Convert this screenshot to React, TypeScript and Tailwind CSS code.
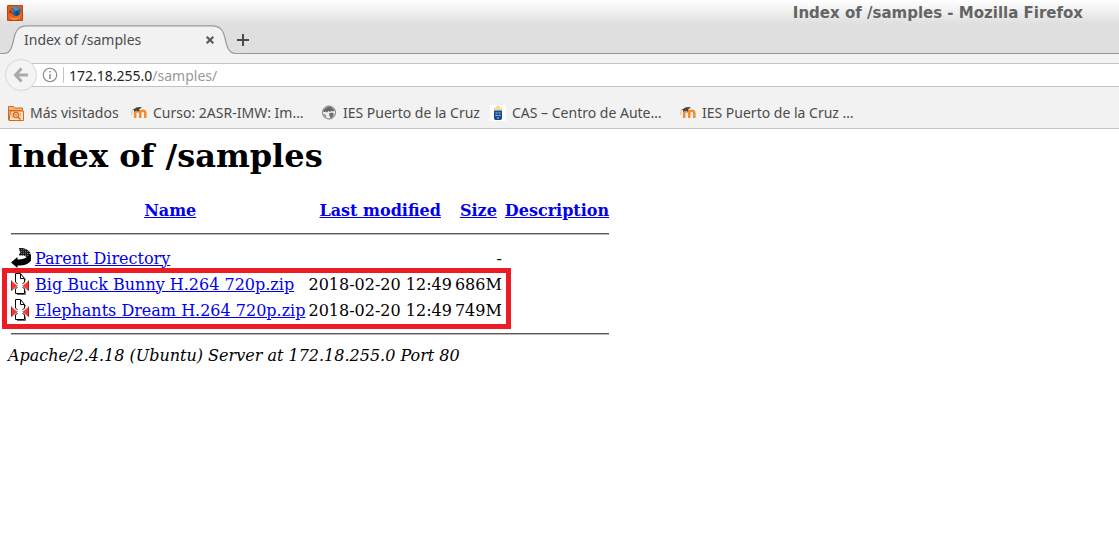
import React from "react";

function FirefoxIcon() {
  return (
    <svg width="16" height="16" viewBox="0 0 16 16" aria-hidden="true">
      <rect width="16" height="16" rx="1" fill="#b5481a" />
      <rect x="1" y="1" width="14" height="14" fill="#e0601c" />
      <circle cx="8.500" cy="7" r="5.500" fill="#22669c" />
      <path d="M5 2.500c2.500-1.500 6-.6 7.500 1.500l-2 .8.5 1.500-3-.5z" fill="#4295c6" />
      <path d="M9 5.500l2.500 1 .5 3-2.500 2-1.500-2z" fill="#1b4a79" />
      <path d="M1 2c.8 1.500 2 1.800 3.500 2L7 6 5 7.200c0 2.200 1.500 3.800 4 3.800 2.500 0 4.200-1.500 4.700-4l.7-2.500C15.600 9 13.500 14.800 8.300 14.800 3 14.800.6 10.500 1 6z" fill="#e9601d" />
      <path d="M2 9.500c1 3 3.500 4.200 7 3.800 2.500-.5 4-2.300 4.800-4.500-.5 3.700-2.800 6-6.100 6C4.500 14.800 2.300 12.500 2 9.500z" fill="#f39a2b" />
      <path d="M2.500 4.500l2.500 1.500-1 3-1.500-1z" fill="#a52b13" />
    </svg>
  );
}

function MostVisitedIcon() {
  return (
    <svg width="16" height="16" viewBox="0 0 16 16" fill="none" aria-hidden="true">
      <path d="M.5 15V1.500h5l1 1.500h8v3" fill="#f4b780" stroke="#d5691b" />
      <path d="M1 15.500l1.500-9.500h13V15.500z" fill="#fbdfc0" stroke="#d5691b" />
      <path d="M1 5.500h12.500" stroke="#d5691b" />
      <circle cx="8" cy="10" r="2.600" stroke="#d5691b" strokeWidth="1.300" />
      <circle cx="8" cy="10" r=".9" fill="#d5691b" />
      <path d="M10 12l2.500 2.500" stroke="#d5691b" strokeWidth="1.500" />
      <path d="M4 8v5M12.500 8v3" stroke="#eda468" />
    </svg>
  );
}

function MoodleIcon() {
  return (
    <svg width="16" height="16" viewBox="0 0 16 16" fill="none" aria-hidden="true">
      <path d="M4.200 13V8C4.200 5.700 9 5.500 9.200 8V13M9.200 8C9.400 4.900 14.300 5 14.300 8V13" stroke="#f68b2c" strokeWidth="2.500" />
      <path d="M1.500 4.700L6 2.300l5-.3L8.300 4.500l-.2 2.200C6.500 5.300 4.800 5.700 3.200 7l-.3-2z" fill="#454545" />
      <path d="M1.500 4.700C.8 6 .8 8 .6 9.800" stroke="#c9b8a5" strokeWidth=".8" />
    </svg>
  );
}

function GlobeIcon() {
  return (
    <svg width="16" height="16" viewBox="0 0 16 16" aria-hidden="true">
      <circle cx="8" cy="7.500" r="6.500" fill="#eee" stroke="#777" strokeWidth="1" />
      <path d="M4 3.500c1.500-1.500 4-2 6-1.600l2 1.600 1.500 2-1.500 1-1.500-.7-1 1.200-2-1L6 7.500 4.500 6.500 3 7.200 2 6z" fill="#686868" />
      <path d="M8 8.500l2.500-1 2.500 1-1 3-2 2-1.500-2.500z" fill="#707070" />
      <path d="M2.500 9l2 .5 1 3-1.300-.3z" fill="#888" />
    </svg>
  );
}

function CanaryIcon() {
  return (
    <svg width="16" height="16" viewBox="0 0 16 16" aria-hidden="true">
      <rect width="16" height="16" fill="#fff" />
      <path d="M4.500 5L3.500 2.500l2 .4L7 1.500l1-.9 1 .9 1.500 1.400 2-.4L11.500 5z" fill="#f4cd72" />
      <path d="M5 3.500h6" stroke="#fff4d6" strokeWidth=".7" />
      <path d="M4 5.500h8v7.500c0 1.500-1 2-2 2H6c-1 0-2-.5-2-2z" fill="#124d94" />
      <path d="M5.500 7.500h2v1h-2zM8.500 7.500h2v1h-2zM5.500 10h2v1h-2zM8.500 10h2v1h-2zM7 12.500h2v1H7z" fill="#b9cee6" />
    </svg>
  );
}

function ParentIcon() {
  return (
    <svg className="block" width="20" height="22" viewBox="0 0 20 22" aria-hidden="true">
      <defs>
        <pattern id="dither" width="2" height="2" patternUnits="userSpaceOnUse">
          <rect width="2" height="2" fill="#1c1c1c" />
          <rect width="1" height="1" fill="#777" />
        </pattern>
      </defs>
      <path d="M8 1h4l4 1.500L19 5l1 4-3 2-4-2.500L8 8.500V7l1.500-2L8 3z" fill="url(#dither)" />
      <path d="M0 15.500L6.500 10v2.500c5 .2 9.500-1.500 12.500-5l1 .5v5.500C17.500 17.500 12 18.700 6.500 18.500V21z" fill="#000" />
    </svg>
  );
}

function ArchiveIcon() {
  return (
    <svg className="block" width="20" height="22" viewBox="0 0 20 22" fill="none" aria-hidden="true">
      <path d="M4.500.5h5l4 5v15h-9z" fill="#fff" stroke="#000" />
      <path d="M9.500 1v4.500h4" stroke="#000" />
      <path d="M14.500 6v15.500H6" stroke="#666" />
      <path d="M4 6.500l3.500 6L4 18.500zM15 6.500l-3.500 6 3.500 6z" fill="#fff" />
      <path d="M0 7.500l6 5-6 5z" fill="#f33" />
      <path d="M18 7.500l-6 5 6 5z" fill="#f33" />
      <path d="M.5 7.500v10l6-5M17.500 7.500v10l-6-5" stroke="#8a1b1b" strokeWidth=".8" />
      <path d="M4.500 6v3l2 2M4.500 20v-4l2-2M13.500 6v3l-2 2M13.500 20v-4l-2-2" stroke="#111" />
    </svg>
  );
}

const bookmarks = [
  { icon: <MostVisitedIcon />, label: "Más visitados" },
  { icon: <MoodleIcon />, label: "Curso: 2ASR-IMW: Im…" },
  { icon: <GlobeIcon />, label: "IES Puerto de la Cruz" },
  { icon: <CanaryIcon />, label: "CAS – Centro de Aute…" },
  { icon: <MoodleIcon />, label: "IES Puerto de la Cruz …" },
];

const entries = [
  { icon: <ParentIcon />, name: "Parent Directory", modified: "", size: "-" },
  { icon: <ArchiveIcon />, name: "Big Buck Bunny H.264 720p.zip", modified: "2018-02-20 12:49", size: "686M" },
  { icon: <ArchiveIcon />, name: "Elephants Dream H.264 720p.zip", modified: "2018-02-20 12:49", size: "749M" },
];

function Rule() {
  return (
    <tr>
      <td colSpan={5} className="py-px pl-px">
        <hr className="my-2 h-[2px] border-t border-b border-t-[#5a5a5a] border-b-[#b8b8b8]" />
      </td>
    </tr>
  );
}

function BrowserChrome() {
  return (
    <header className="border-b border-[#c3c3c3] bg-[#f2f2f2] font-['Noto_Sans',sans-serif] text-[14px] leading-5 text-[#4c4c4c]">
      <div className="bg-linear-to-b from-white from-0% to-[#dfdfdf] to-[24px]">
        <div className="flex h-[25px] items-center justify-between pr-9 pl-[7px]">
          <FirefoxIcon />
          <span className="font-['DejaVu_Sans',sans-serif] text-[15px] font-bold text-[#646464]">Index of /samples - Mozilla Firefox</span>
        </div>
        <div className="flex h-[29px] border-b border-[#959595]">
          <div className="relative h-[29px] w-[235px] shrink-0">
            <svg className="absolute top-0 left-0" width="242" height="29" viewBox="0 0 242 29" fill="none" aria-hidden="true">
              <path d="M4 29C11 28 12.500 20 14 13C16 5 19 .8 27 .8H212C220 .8 223 5 225 13C226.500 20 228 28 236 29Z" fill="#f2f2f2" />
              <path d="M0 28.500H4C11 28.500 12.500 20 14 13C16 5 19 .8 27 .8H212C220 .8 223 5 225 13C226.500 20 228 28.500 236 28.500H242" stroke="#959ba0" strokeWidth="1.200" />
            </svg>
            <div className="relative flex h-[29px] items-center justify-between pr-5 pl-6">
              <span>Index of /samples</span>
              <button type="button" aria-label="Close tab" className="flex">
                <svg width="10" height="10" viewBox="0 0 10 10" stroke="#5c5c5c" strokeWidth="2.200">
                  <path d="M1.700 1.700l6.600 6.600M8.300 1.700L1.700 8.300" />
                </svg>
              </button>
            </div>
          </div>
          <button type="button" aria-label="New tab" className="flex items-center px-px pt-px">
            <svg width="14" height="14" viewBox="0 0 14 14" stroke="#4a4a4a" strokeWidth="2">
              <path d="M7 1v12M1 7h12" />
            </svg>
          </button>
        </div>
      </div>
      <div className="flex items-center pt-[5px] pl-[5px]">
        <button type="button" aria-label="Back" className="z-10 flex size-8 shrink-0 items-center justify-center rounded-full border border-[#d6d6d6] bg-[#f4f4f4]">
          <svg width="16" height="16" viewBox="0 0 16 16" fill="none" stroke="#a9a9a9" strokeWidth="3">
            <path d="M8.500 1.500L2.500 8l6 6.500M3 8h12" />
          </svg>
        </button>
        <div className="-ml-2 flex h-6 grow items-center border-y border-[#c3c3c3] bg-white pl-[13px]">
          <svg width="16" height="16" viewBox="0 0 16 16" fill="none" stroke="#8a8a8a" aria-hidden="true">
            <circle cx="8" cy="8" r="6.700" strokeWidth="1.100" />
            <path d="M8 7v5M8 4v1.500" strokeWidth="1.500" />
          </svg>
          <span className="mx-[5px] h-4 border-l border-[#c4c4c4]" />
          <label htmlFor="path" className="pt-[2px] text-[#222]">172.18.255.0</label>
          <input id="path" defaultValue="/samples/" className="min-w-0 grow bg-transparent pt-[2px] text-[#999] outline-none" />
        </div>
      </div>
      <nav className="grid grid-cols-[123px_190px_169px_190px_1fr] pt-3 pb-[5px] pl-2">
        {bookmarks.map((b) => (
          <a key={b.label} href="#" className="flex items-center gap-[6px] whitespace-nowrap">
            {b.icon}
            {b.label}
          </a>
        ))}
      </nav>
    </header>
  );
}

export default function App() {
  return (
    <div className="min-h-screen bg-white">
      <BrowserChrome />
      <main className="px-2 pt-[9px] pb-2 font-['DejaVu_Serif',serif] text-[16px] leading-[19px] text-black">
        <h1 className="text-[32px] leading-[37px] font-bold">Index of /samples</h1>
        <div className="relative mt-[21px] w-fit">
          <table className="border-separate border-spacing-[2px] whitespace-nowrap">
            <thead>
              <tr className="h-6 text-center text-[#0000ee] underline">
                <td className="w-[22px] p-px" />
                <th className="py-px pl-px"><a href="#">Name</a></th>
                <th className="py-px pl-px"><a href="#">Last modified</a></th>
                <th className="py-px pl-px"><a href="#">Size</a></th>
                <th className="py-px pl-px"><a href="#">Description</a></th>
              </tr>
            </thead>
            <tbody>
              <Rule />
              {entries.map((e) => (
                <tr key={e.name}>
                  <td className="p-px">{e.icon}</td>
                  <td className="py-px pl-px"><a href="#" className="text-[#0000ee] underline">{e.name}</a></td>
                  <td className="py-px pl-px text-right">{e.modified}</td>
                  <td className="py-px pl-px text-right">{e.size}</td>
                  <td className="py-px pl-px" />
                </tr>
              ))}
              <Rule />
            </tbody>
          </table>
          <div className="pointer-events-none absolute top-[72px] -left-[6px] h-[61px] w-[509px] border-5 border-[#ed1c24]" />
        </div>
        <address className="italic">Apache/2.4.18 (Ubuntu) Server at 172.18.255.0 Port 80</address>
      </main>
    </div>
  );
}
